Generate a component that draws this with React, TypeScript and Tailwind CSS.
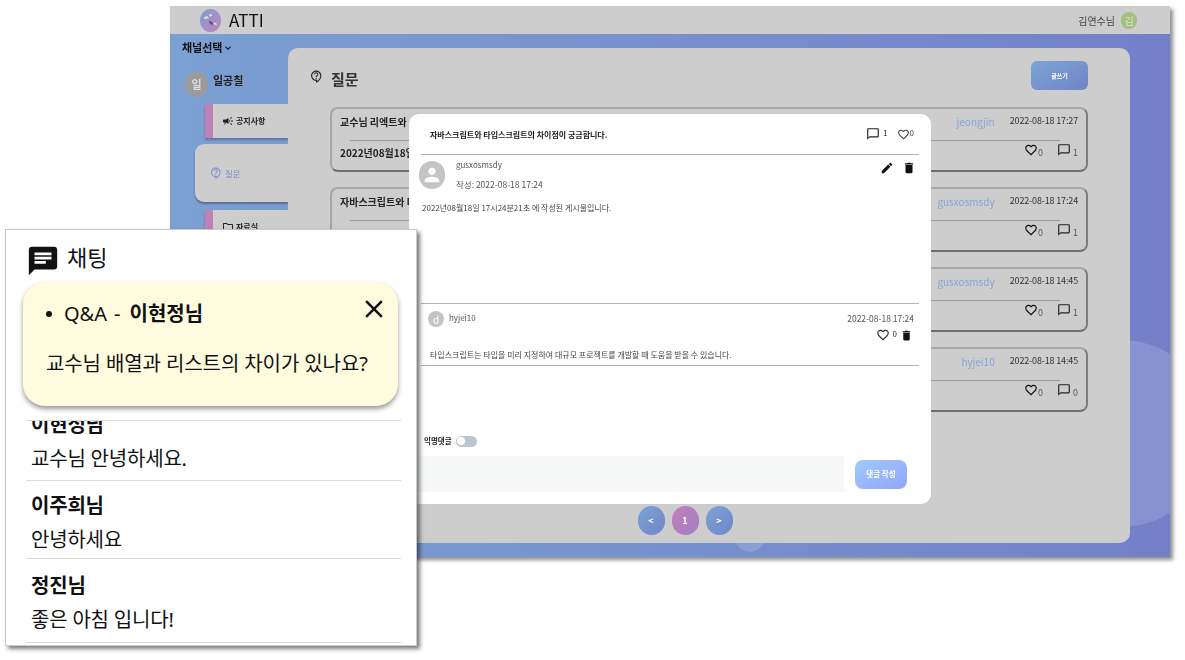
import React from 'react';
import {
  MdCampaign,
  MdChat,
  MdClose,
  MdDelete,
  MdEdit,
  MdFavoriteBorder,
  MdKeyboardArrowDown,
  MdOutlineChatBubbleOutline,
  MdOutlineContactSupport,
  MdOutlineFolder,
  MdPerson,
} from 'react-icons/md';

const posts = [
  { title: '교수님 리엑트와', date: '2022년08월18일 1', user: 'jeongjin', at: '2022-08-18 17:27', comments: 1 },
  { title: '자바스크립트와 타', date: '', user: 'gusxosmsdy', at: '2022-08-18 17:24', comments: 1 },
  { title: '', date: '', user: 'gusxosmsdy', at: '2022-08-18 14:45', comments: 1 },
  { title: '', date: '', user: 'hyjei10', at: '2022-08-18 14:45', comments: 0 },
];

function Logo() {
  return (
    <svg viewBox="0 0 24 24" className="w-[21px] h-[23px]" preserveAspectRatio="none">
      <defs>
        <linearGradient id="logo" x1="0" y1="0" x2="1" y2="1">
          <stop offset="0" stopColor="#7d9fd2" />
          <stop offset="1" stopColor="#c084bd" />
        </linearGradient>
      </defs>
      <circle cx="12" cy="12" r="12" fill="url(#logo)" />
      <path d="M4 9l4-2 2 2-4 2zM10 6l3-1 1 2-3 1z" fill="#dcdcdc" />
      <path d="M10 12l3 1 2 2-1 2-3-2z" fill="#5a5a70" />
      <path d="M16 14l3 1 0 2-3-1z" fill="#e6e6e6" />
    </svg>
  );
}

function PostCard({ post }: { post: (typeof posts)[number] }) {
  return (
    <div className="h-[65px] rounded-lg border-2 border-[#a5a5a5] border-r-[#7d7d7d] border-b-[#6f6f6f] px-[8px]">
      <div className="flex items-center h-[24px]">
        <span className="text-[10px] font-bold text-[#222]">{post.title}</span>
        <span className="ml-auto text-[10px] text-[#86a3d8]">{post.user}</span>
        <span className="ml-[15px] text-[9px] tracking-[-0.15px] text-[#333]">{post.at}</span>
      </div>
      <div className="h-px bg-[#999] ml-[10px] mr-[18px] mt-[7px]" />
      <div className="flex items-start h-[30px] pt-[2px]">
        <span className="text-[10px] font-bold text-[#222] mt-[2px]">{post.date}</span>
        <span className="ml-auto flex items-end text-[#111]">
          <MdFavoriteBorder className="w-[14px] h-[14px]" />
          <span className="text-[9px] text-[#555] leading-none">0</span>
        </span>
        <span className="ml-[14px] flex items-end text-[#222]">
          <MdOutlineChatBubbleOutline className="w-[14px] h-[14px]" />
          <span className="ml-[2px] text-[9px] text-[#555] leading-none">{post.comments}</span>
        </span>
      </div>
    </div>
  );
}

function NavTab({ label, icon, top }: { label: string; icon: React.ReactNode; top: string }) {
  return (
    <div className={`${top} ml-[35px] h-[34px] flex items-center bg-[#cdcdcd] border-l-[8px] border-[#bf80b8] pl-[9px] gap-[2px] text-[8px] font-bold text-[#222] shadow-[0_2px_2px_rgba(0,0,0,0.25)]`}>
      {icon}
      {label}
    </div>
  );
}

function PostModal() {
  return (
    <div className="absolute left-[239px] top-[80px] w-[522px] h-[390px] bg-white rounded-[10px] flex flex-col text-[#444]">
      <div className="h-[41px] mx-[12px] border-b border-[#b5b5b5] flex items-center pl-[9px] pr-[5px]">
        <span className="text-[8px] font-bold text-[#222] mt-[2px]">자바스크립트와 타입스크립트의 차이점이 궁금합니다.</span>
        <span className="ml-auto flex items-center text-[#222]">
          <MdOutlineChatBubbleOutline className="w-[14px] h-[14px]" />
          <span className="ml-[3px] text-[8px] -mt-[2px]">1</span>
        </span>
        <span className="ml-[9px] flex items-center text-[#444]">
          <MdFavoriteBorder className="w-[13px] h-[13px]" />
          <span className="text-[8px] -mt-[2px]">0</span>
        </span>
      </div>

      <div className="h-[148px] mx-[10px] flex flex-col">
        <div className="flex pt-[6px] h-[43px]">
          <div className="w-[26px] h-[28px] rounded-full bg-[#c4c4c4] flex items-center justify-center text-white">
            <MdPerson className="w-[22px] h-[22px]" />
          </div>
          <div className="ml-[11px] flex flex-col text-[8px] leading-none text-[#555]">
            <span>gusxosmsdy</span>
            <span className="mt-[11px] text-[8.5px]">작성: 2022-08-18 17:24</span>
          </div>
          <div className="ml-auto flex gap-[8px] pr-[5px] text-[#111]">
            <MdEdit className="w-[14px] h-[14px]" />
            <MdDelete className="w-[14px] h-[14px]" />
          </div>
        </div>
        <p className="ml-[3px] mt-[6px] text-[8px] leading-none text-[#444]">2022년08월18일 17시24분21초 에 작성된 게시물입니다.</p>
      </div>

      <div className="h-[63px] mx-[12px] border-t border-b border-[#b5b5b5] flex flex-col">
        <div className="flex h-[39px] pl-[7px] pr-[5px] pt-[7px]">
          <div className="w-[16px] h-[16px] rounded-full bg-[#c4c4c4] flex items-center justify-center text-white text-[10px]">d</div>
          <span className="ml-[5px] mt-[3px] text-[8px] leading-none text-[#555]">hyjei10</span>
          <div className="ml-auto flex flex-col items-end">
            <span className="text-[8.5px] leading-[14px] text-[#555]">2022-08-18 17:24</span>
            <span className="flex items-center mt-[3px] pr-[1px] text-[#333]">
              <MdFavoriteBorder className="w-[14px] h-[14px]" />
              <span className="ml-[3px] mr-[3px] text-[8px] -mt-[2px]">0</span>
              <MdDelete className="w-[13px] h-[13px] text-[#111]" />
            </span>
          </div>
        </div>
        <p className="ml-[9px] text-[8px] leading-none mt-[8px] text-[#444]">타입스크립트는 타입을 미리 지정하여 대규모 프로젝트를 개발할 때 도움을 받을 수 있습니다.</p>
      </div>

      <div className="flex items-center ml-[15px] mt-[69px] h-[12px] gap-[4px]">
        <span className="text-[7.5px] font-bold text-[#222]">익명댓글</span>
        <div className="w-[21px] h-[11px] rounded-full bg-[#bcc5d0] flex items-center pl-[1px]">
          <div className="w-[8px] h-[8px] rounded-full bg-white" />
        </div>
      </div>

      <div className="flex items-center mt-[9px]">
        <div className="w-[435px] h-[36px] bg-[#f6f8f8]" />
        <div className="ml-[11px] w-[52px] h-[29px] rounded-lg bg-gradient-to-br from-[#9fcbfb] to-[#92a4f8] flex items-center justify-center text-white text-[7.5px] font-bold">
          댓글 작성
        </div>
      </div>
    </div>
  );
}

function MainWindow() {
  return (
    <div className="absolute left-[170px] top-[6px] w-[1000px] h-[551px] flex flex-col shadow-[3px_3px_4px_rgba(0,0,0,0.45)] blur-[0.4px]">
      <header className="h-[28px] shrink-0 bg-[#cdcdcd] flex items-center pl-[30px] pr-[33px]">
        <Logo />
        <span className="ml-[8px] text-[17px] text-[#111]">ATTI</span>
        <span className="ml-auto text-[10px] text-[#444]">김연수님</span>
        <span className="ml-[6px] w-[16px] h-[17px] rounded-full bg-[#a3c07f] text-[#d8e6c8] text-[10px] flex items-center justify-center">김</span>
      </header>

      <div className="relative flex-1 flex overflow-hidden bg-gradient-to-r from-[#7ba0d2] to-[#7380c9]">
        <div className="absolute left-[857px] top-[306px] w-[187px] h-[187px] rounded-full bg-white/15" />
        <div className="absolute left-[565px] top-[488px] w-[30px] h-[30px] rounded-full bg-white/15" />

        <aside className="relative w-[118px] shrink-0">
          <div className="flex items-center pl-[12px] pb-[1px] h-[28px] text-[11px] font-bold text-[#111]">
            채널선택
            <MdKeyboardArrowDown className="w-[12px] h-[12px]" />
          </div>
          <div className="flex items-start pl-[15px] mt-[10px] h-[32px]">
            <div className="w-[23px] h-[25px] rounded-full bg-[#9b9b9b] text-[#ddd] text-[11px] font-bold flex items-center justify-center">일</div>
            <span className="ml-[5px] text-[11px] font-bold text-[#222]">일공칠</span>
          </div>
          <NavTab top="mt-0" label="공지사항" icon={<MdCampaign className="w-[12px] h-[12px]" />} />
          <div className="mt-[6px] ml-[25px] h-[58px] bg-[#cdcdcd] rounded-l-[9px] flex items-center pl-[15px] gap-[3px] text-[8.5px] text-[#7f8ad0] shadow-[0_2px_2px_rgba(0,0,0,0.3)]">
            <MdOutlineContactSupport className="w-[12px] h-[12px]" />
            질문
          </div>
          <NavTab top="mt-[8px]" label="자료실" icon={<MdOutlineFolder className="w-[12px] h-[12px]" />} />
        </aside>

        <main className="relative mt-[14px] mb-[14px] w-[842px] bg-[#cdcdcd] rounded-[10px] pl-[42px] pr-[42px] flex flex-col">
          <div className="h-[45px] mt-[13px] flex items-start -ml-[20px]">
            <MdOutlineContactSupport className="w-[13px] h-[13px] mt-[9px] text-[#222]" />
            <span className="ml-[8px] text-[15px] font-bold text-[#333] leading-[22px] mt-[7px]">질문</span>
            <div className="ml-auto w-[57px] h-[29px] rounded-md bg-gradient-to-br from-[#7ba4d3] to-[#7284c9] text-white text-[6px] font-bold flex items-center justify-center">
              글쓰기
            </div>
          </div>
          <div className="flex flex-col gap-[15px] mt-[1px]">
            {posts.map((post, i) => (
              <PostCard key={i} post={post} />
            ))}
          </div>
          <div className="mt-auto mb-[8px] pr-[48px] flex justify-center gap-[7px] text-white text-[9px] font-bold">
            <div className="w-[27px] h-[29px] rounded-full bg-gradient-to-br from-[#7ba4d3] to-[#7284c9] flex items-center justify-center">&lt;</div>
            <div className="w-[27px] h-[29px] rounded-full bg-gradient-to-br from-[#c27fb9] to-[#a07fc4] flex items-center justify-center">1</div>
            <div className="w-[27px] h-[29px] rounded-full bg-gradient-to-br from-[#7ba4d3] to-[#7284c9] flex items-center justify-center">&gt;</div>
          </div>
        </main>

        <PostModal />
      </div>
    </div>
  );
}

function ChatPanel() {
  return (
    <div className="absolute left-[5px] top-[229px] w-[412px] h-[417px] bg-white border border-[#c9c9c9] shadow-[3px_3px_4px_rgba(0,0,0,0.5)] flex flex-col text-[#111] font-['Noto_Sans','Noto_Sans_CJK_KR',sans-serif]">
      <div className="h-[52px] shrink-0 flex items-center pl-[20px] pt-[7px]">
        <MdChat className="w-[34px] h-[34px] text-[#111] mt-[3px]" />
        <span className="ml-[7px] text-[22px] leading-none -mt-[5px]">채팅</span>
      </div>

      {/* pinned notice sits over the top of the message list */}
      <div className="absolute left-[17px] top-[52px] w-[375px] h-[124px] bg-[#fffbdf] rounded-[22px] shadow-[0_3px_5px_rgba(0,0,0,0.4)] pl-[23px] pt-[17px]">
        <div className="flex items-center h-[30px] text-[20px]">
          <span className="w-[6px] h-[6px] rounded-full bg-[#111]" />
          <span className="ml-[12px]">Q&amp;A</span>
          <span className="ml-[7px]">-</span>
          <b className="ml-[9px]">이현정님</b>
        </div>
        <p className="mt-[20px] text-[20px] leading-[30px] tracking-[-0.1px]">교수님 배열과 리스트의 차이가 있나요?</p>
        <MdClose className="absolute right-[9px] top-[12px] w-[30px] h-[30px]" />
      </div>

      <div className="mt-[138px] ml-[20px] mr-[15px] h-[224px] overflow-hidden border-t border-[#dcdcdc] text-[20px] leading-[34px] tracking-[-0.2px]">
        <div className="h-[60px] border-b border-[#dcdcdc] flex flex-col justify-end overflow-hidden px-[5px] pb-[4px]">
          <b className="shrink-0">이현정님</b>
          <span className="shrink-0">교수님 안녕하세요.</span>
        </div>
        <div className="h-[78px] border-b border-[#dcdcdc] px-[5px] pt-[8px]">
          <b className="block">이주희님</b>
          <span className="block">안녕하세요</span>
        </div>
        <div className="h-[84px] border-b border-[#dcdcdc] px-[5px] pt-[10px]">
          <b className="block">정진님</b>
          <span className="block">좋은 아침 입니다!</span>
        </div>
      </div>
    </div>
  );
}

export default function App() {
  return (
    <div className="relative w-[1185px] h-[660px] overflow-hidden bg-white font-['Noto_Sans_CJK_KR','Noto_Sans',sans-serif]">
      <MainWindow />
      <ChatPanel />
    </div>
  );
}
